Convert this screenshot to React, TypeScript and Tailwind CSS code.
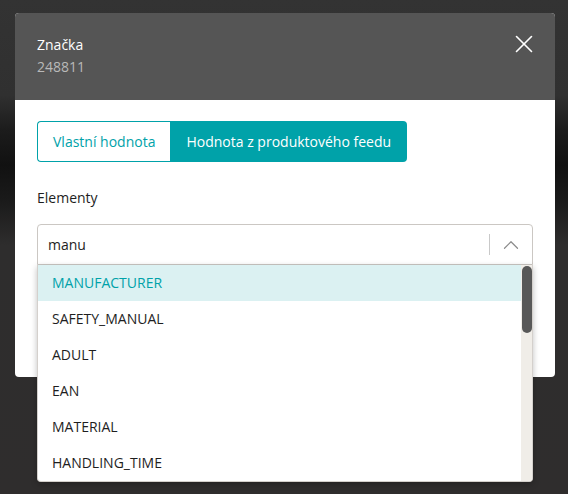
import { X, ChevronUp } from "lucide-react";

const items = ["MANUFACTURER", "SAFETY_MANUAL", "ADULT", "EAN", "MATERIAL", "HANDLING_TIME"];

export default function App() {
  return (
    <div className="h-[494px] w-full overflow-hidden bg-[linear-gradient(180deg,#333333_0px,#303030_95px,#1c1c1c_130px,#111111_165px,#1a1a1a_200px,#2e2d2d_245px,#2f2d2d_494px)] px-[15px] pt-[13px] font-['Open_Sans',sans-serif] text-[14px]">
      <div className="relative w-[540px] rounded-[4px] bg-white">
        <div className="flex h-[87px] items-start justify-between rounded-t-[4px] bg-[#555555] px-[22px] pt-[21px]">
          <div className="leading-[22px]">
            <p className="font-medium text-white">Značka</p>
            <p className="text-[#b9b9b9]">248811</p>
          </div>
          <button className="-mr-[6px] -mt-[5px] text-white">
            <X size={30} strokeWidth={1.3} />
          </button>
        </div>

        <div className="h-[277px] px-[22px] pt-[21px]">
          <div className="flex h-[41px] w-fit">
            <button className="rounded-l-[4px] border border-r-0 border-[#00a2a9] bg-white px-[15px] text-[#00a2a9]">
              Vlastní hodnota
            </button>
            <button className="rounded-r-[4px] bg-[#00a2a9] px-[16px] text-white">
              Hodnota z produktového feedu
            </button>
          </div>

          <p className="mt-[25px] text-[#1e1e1e]">Elementy</p>

          <div className="relative mt-[16px]">
            <div className="flex h-[41px] items-center rounded-t-[4px] border border-[#cbc7c3] pl-[10px] pr-[2px]">
              <span className="flex-1 text-[#1e1e1e]">manu</span>
              <span className="h-[21px] w-px bg-[#c9c9c9]" />
              <ChevronUp size={26} strokeWidth={1.1} className="ml-[8px] mr-[6px] text-[#8a8a8a]" />
            </div>

            <div className="absolute left-0 top-[41px] z-10 flex h-[217px] w-[496px] overflow-hidden rounded-b-[4px] border border-t-0 border-[#d4d0cc] bg-white shadow-[0_2px_6px_rgba(0,0,0,0.25)]">
              <ul className="flex-1">
                {items.map((item, i) => (
                  <li
                    key={item}
                    className={
                      i === 0
                        ? "flex h-[36px] items-center bg-[#dbf1f2] pb-[2px] pl-[14px] text-[#00a2a9]"
                        : "flex h-[36px] items-center pb-[2px] pl-[14px] text-[#1e1e1e]"
                    }
                  >
                    {item}
                  </li>
                ))}
              </ul>
              <div className="w-[11px] bg-[#f0ede8] pt-[1px]">
                <div className="mx-auto h-[67px] w-[10px] rounded-full bg-[#585858]" />
              </div>
            </div>
          </div>
        </div>
      </div>
    </div>
  );
}
